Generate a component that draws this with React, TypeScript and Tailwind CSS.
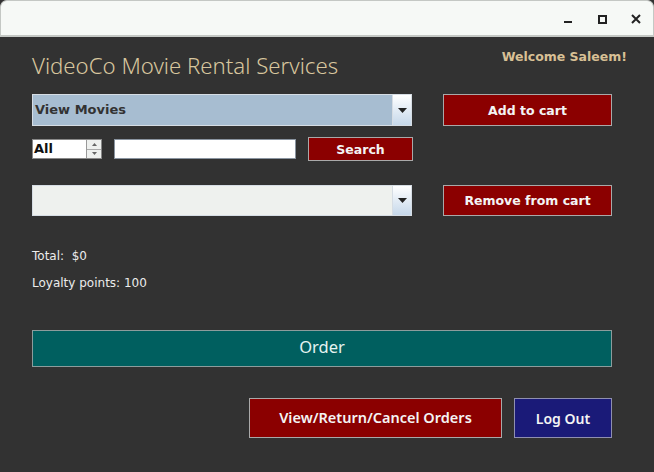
import React from "react";

const dejavu = { fontFamily: '"DejaVu Sans", sans-serif' };

function Combo({ label, bg }: { label?: string; bg: string }) {
  return (
    <div className={`flex h-full w-[380px] border border-[#d6dde4] ${bg}`}>
      <div className="flex flex-1 items-center px-[2px] text-[13px] font-bold text-[#333]">{label}</div>
      <div className="flex w-[19px] items-center justify-center border-l border-[#d6dde4] bg-gradient-to-b from-[#ffffff] to-[#c6d8ea]">
        <svg width="9" height="5" viewBox="0 0 9 5">
          <path d="M0 0h9L4.5 5z" fill="#222" />
        </svg>
      </div>
    </div>
  );
}

function RedButton({ text, className }: { text: string; className: string }) {
  return (
    <button className={`flex items-center justify-center border border-[#a9a9a9] bg-[#8b0000] pt-[2px] text-[12.5px] font-bold text-[#f4f4f4] ${className}`}>
      {text}
    </button>
  );
}

export default function App() {
  return (
    <div className="h-[472px] w-[654px] overflow-hidden bg-[#323232]" style={dejavu}>
      <div className="flex h-[37px] items-center justify-end rounded-t-[7px] border border-b-2 border-[#c4c8c4] bg-[#f6f9f6] pt-[2px] text-[#222]">
        <div className="flex w-[34px] justify-center">
          <div className="mt-[6px] h-[2px] w-[8px] bg-[#222]" />
        </div>
        <div className="flex w-[34px] justify-center">
          <div className="h-[9px] w-[9px] border-2 border-[#222]" />
        </div>
        <div className="flex w-[34px] justify-center">
          <svg width="10" height="10" viewBox="0 0 10 10">
            <path d="M1 1l8 8M9 1l-8 8" stroke="#222" strokeWidth="2" />
          </svg>
        </div>
      </div>

      <div className="px-[32px]">
        <div className="flex h-[57px] items-start justify-between">
          <h1 className="mt-[15px] text-[22.2px] font-light leading-[28px] text-[#d8c69e]" style={{ fontFamily: '"Noto Sans", sans-serif' }}>
            VideoCo Movie Rental Services
          </h1>
          <div className="-mr-[5px] mt-[13px] text-[12.5px] font-bold leading-[14px] text-[#d8c095]">Welcome Saleem!</div>
        </div>

        <div className="flex h-[32px] gap-[31px]">
          <Combo label="View Movies" bg="bg-[#a7bdd1]" />
          <RedButton text="Add to cart" className="w-[169px]" />
        </div>

        <div className="mt-[11px] flex h-[24px] items-center">
          <div className="flex h-[20px] w-[70px] border border-[#888] bg-white">
            <div className="flex flex-1 items-center pl-[1px] text-[13px] font-bold text-[#111]">All</div>
            <div className="flex w-[15px] flex-col border-l border-[#999]">
              <div className="flex flex-1 items-center justify-center border-b border-[#aaa] bg-[#eef0ee]">
                <svg width="5" height="3" viewBox="0 0 5 3"><path d="M0 3h5L2.5 0z" fill="#666" /></svg>
              </div>
              <div className="flex flex-1 items-center justify-center bg-[#eef0ee]">
                <svg width="5" height="3" viewBox="0 0 5 3"><path d="M0 0h5L2.5 3z" fill="#666" /></svg>
              </div>
            </div>
          </div>
          <div className="ml-[12px] h-[20px] w-[182px] border border-[#8a94a0] bg-white" />
          <RedButton text="Search" className="ml-[12px] h-[24px] w-[105px]" />
        </div>

        <div className="mt-[24px] flex h-[31px] gap-[31px]">
          <Combo bg="bg-[#eef1ee]" />
          <RedButton text="Remove from cart" className="w-[169px]" />
        </div>

        <div className="mt-[30px] text-[12px] leading-[20px] text-[#ececec]">Total:&nbsp; $0</div>
        <div className="mt-[7px] text-[12px] leading-[20px] text-[#ececec]">Loyalty points: 100</div>

        <button className="mt-[37px] flex h-[37px] w-[580px] items-center justify-center border border-[#8c9c9c] bg-[#005f5f] pb-[2px] text-[16.5px] text-[#e6f4f2]" style={{ fontFamily: '"Noto Sans", sans-serif' }}>
          Order
        </button>

        <div className="mt-[31px] flex w-[580px] justify-end gap-[12px]" style={{ fontFamily: '"Noto Sans", sans-serif' }}>
          <button className="flex h-[40px] w-[253px] items-center justify-center border border-[#a9a9a9] bg-[#8b0000] text-[14.5px] font-semibold text-[#f4f4f4]">
            View/Return/Cancel Orders
          </button>
          <button className="flex h-[40px] w-[98px] items-center justify-center border border-[#8f8fb0] bg-[#1a1a78] text-[14px] font-semibold text-[#f4f4f4]">
            Log Out
          </button>
        </div>
      </div>
    </div>
  );
}
